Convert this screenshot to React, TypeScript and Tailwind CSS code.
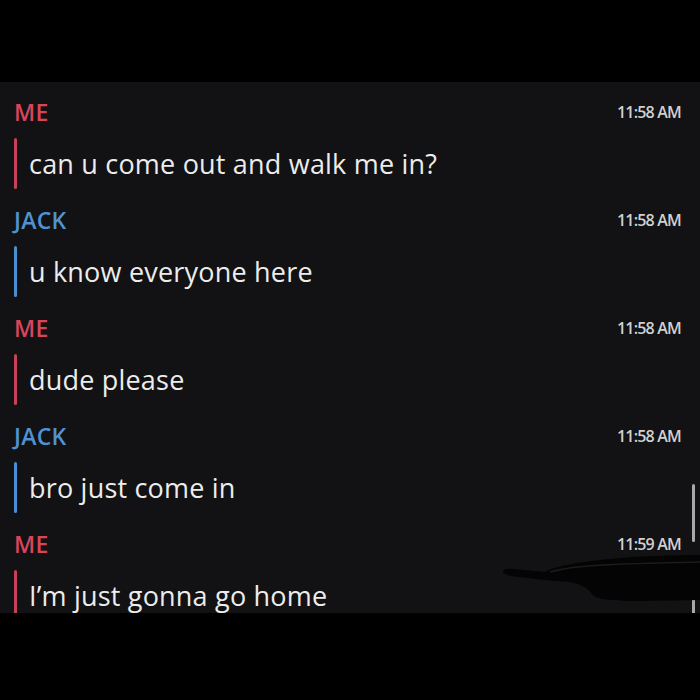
import React from "react";

type Msg = { from: "ME" | "JACK"; time: string; text: string };

const MESSAGES: Msg[] = [
  { from: "ME", time: "11:58 AM", text: "can u come out and walk me in?" },
  { from: "JACK", time: "11:58 AM", text: "u know everyone here" },
  { from: "ME", time: "11:58 AM", text: "dude please" },
  { from: "JACK", time: "11:58 AM", text: "bro just come in" },
  { from: "ME", time: "11:59 AM", text: "I\u2019m just gonna go home" },
];

const FONT = { fontFamily: '"Open Sans", "Noto Sans", sans-serif' };

function Row({ msg }: { msg: Msg }) {
  const isMe = msg.from === "ME";
  return (
    <div className="flex flex-col h-[108px]">
      <div className="flex items-center justify-between h-[26px] mt-[17px] pl-[14px] pr-[19px]">
        <span
          className={`text-[23px] font-semibold tracking-[0.3px] ${isMe ? "text-[#d8455a]" : "text-[#4f93d2]"}`}
        >
          {msg.from}
        </span>
        <span className="text-[16px] text-[#d0d0d0] tracking-[-0.8px] font-semibold">{msg.time}</span>
      </div>
      <div className="flex items-center mt-[13px] h-[51px]">
        <div className={`w-[3px] h-full ml-[14px] rounded-full ${isMe ? "bg-[#c9405a]" : "bg-[#4a8fd3]"}`} />
        <span className="ml-[12px] text-[27px] text-[#ececec] tracking-[0.2px] leading-none">{msg.text}</span>
      </div>
    </div>
  );
}

export default function App() {
  return (
    <div className="w-[700px] h-[700px] bg-black flex flex-col" style={FONT}>
      <div className="h-[82px] shrink-0" />
      <div className="relative h-[531px] bg-[#121113] overflow-hidden">
        {MESSAGES.map((m, i) => (
          <Row key={i} msg={m} />
        ))}
        {/* scrollbar */}
        <div className="absolute right-[5px] top-[402px] w-[3px] h-[58px] bg-[#a8a8a8] rounded-full" />
        <div className="absolute right-[5px] top-[515px] w-[3px] h-[16px] bg-[#a8a8a8]" />
        {/* marker scribble */}
        <svg className="absolute left-[500px] top-[470px]" width="200" height="55" viewBox="0 0 200 55">
          <path
            d="M3 20 C2 17 8 16 14 17 L45 20 C55 14 80 10 110 7 C140 4 170 3 200 3 L200 48 L140 49 C110 49 95 47 92 42 C88 36 80 32 70 30 C55 29 35 27 20 25 C10 24 4 23 3 20 Z"
            fill="#040404"
          />
          <path d="M50 20 C70 14 100 12 200 10" stroke="#1c1c1c" strokeWidth="1.5" fill="none" />
        </svg>
      </div>
      <div className="flex-1" />
    </div>
  );
}
